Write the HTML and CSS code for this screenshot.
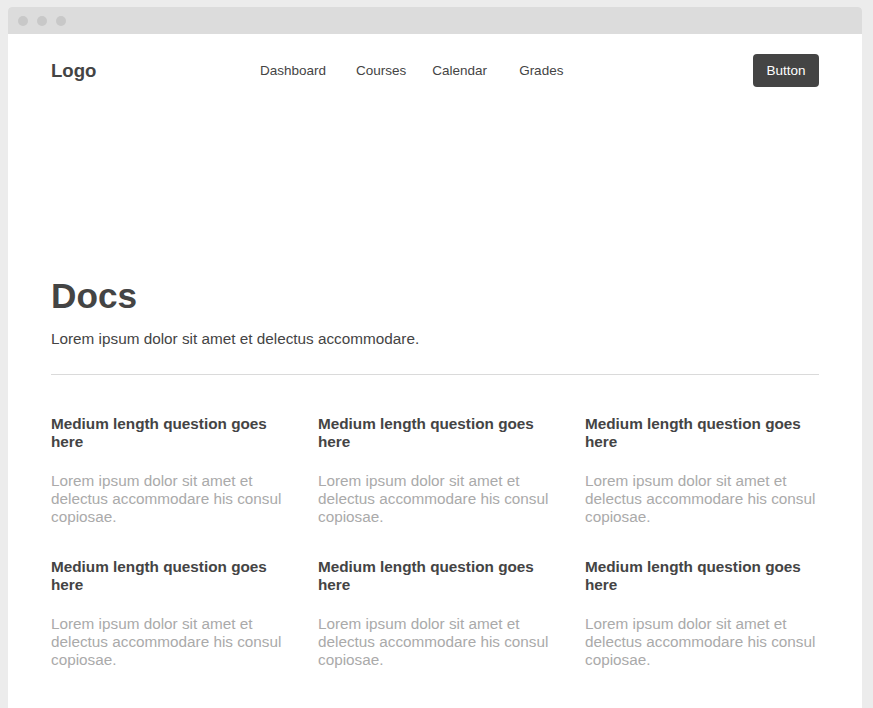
FILE: index.html
```html
<!DOCTYPE html>
<html lang="en">
<head>
<meta charset="utf-8">
<title>Docs</title>
<link rel="stylesheet" href="styles.css">
</head>
<body>
<div class="window">
  <div class="titlebar">
    <span class="dot"></span><span class="dot"></span><span class="dot"></span>
  </div>
  <div class="page">
    <header class="header">
      <div class="logo">Logo</div>
      <nav class="nav">
        <a class="nav-link nav-dash">Dashboard</a>
        <a class="nav-link nav-courses">Courses</a>
        <a class="nav-link nav-cal">Calendar</a>
        <a class="nav-link nav-grades">Grades</a>
      </nav>
      <button class="btn">Button</button>
    </header>
    <section class="hero">
      <h1 class="title">Docs</h1>
      <p class="subtitle">Lorem ipsum dolor sit amet et delectus accommodare.</p>
    </section>
    <hr class="divider">
    <section class="faq">
      <div class="item"><h3 class="q">Medium length question goes here</h3><p class="a">Lorem ipsum dolor sit amet et delectus accommodare his consul copiosae.</p></div>
      <div class="item"><h3 class="q">Medium length question goes here</h3><p class="a">Lorem ipsum dolor sit amet et delectus accommodare his consul copiosae.</p></div>
      <div class="item"><h3 class="q">Medium length question goes here</h3><p class="a">Lorem ipsum dolor sit amet et delectus accommodare his consul copiosae.</p></div>
      <div class="item"><h3 class="q">Medium length question goes here</h3><p class="a">Lorem ipsum dolor sit amet et delectus accommodare his consul copiosae.</p></div>
      <div class="item"><h3 class="q">Medium length question goes here</h3><p class="a">Lorem ipsum dolor sit amet et delectus accommodare his consul copiosae.</p></div>
      <div class="item"><h3 class="q">Medium length question goes here</h3><p class="a">Lorem ipsum dolor sit amet et delectus accommodare his consul copiosae.</p></div>
    </section>
  </div>
</div>
</body>
</html>
```

FILE: styles.css
```css
* { box-sizing: border-box; }
html, body { margin: 0; padding: 0; }
body {
  background: #ececec;
  font-family: "Liberation Sans", Arial, Helvetica, sans-serif;
  color: #444;
  height: 708px;
  overflow: hidden;
}
.window {
  margin: 7px 0 0 8px;
  width: 854px;
  height: 701px;
  background: #fff;
  border-radius: 4px 4px 0 0;
  overflow: hidden;
}
.titlebar {
  height: 27px;
  background: #dcdcdc;
  display: flex;
  align-items: center;
  gap: 9px;
  padding-left: 10px;
}
.dot {
  width: 10px;
  height: 10px;
  border-radius: 50%;
  background: #c8c8c8;
}
.page {
  padding: 0 43px;
}
.header {
  display: flex;
  align-items: center;
  padding-top: 20px;
  height: 53px;
}
.logo {
  flex: 0 0 209px;
  font-size: 18.6px;
  font-weight: 700;
  color: #444;
}
.nav {
  display: flex;
  align-items: center;
  font-size: 13.5px;
}
.nav-link { color: #444; text-decoration: none; }
.nav-courses { margin-left: 30px; }
.nav-cal { margin-left: 26px; }
.nav-grades { margin-left: 32px; }
.btn {
  margin-left: auto;
  width: 66px;
  height: 33px;
  border: 0;
  border-radius: 4px;
  background: #444;
  color: #fff;
  font-family: inherit;
  font-size: 13.5px;
  padding: 0;
}
.hero {
  margin-top: 186px;
}
.title {
  margin: 0;
  font-size: 35.2px;
  line-height: 45px;
  font-weight: 700;
  color: #444;
}
.subtitle {
  margin: 12px 0 0;
  font-size: 15.3px;
  line-height: 18px;
  color: #444;
}
.divider {
  margin: 26px 0 0;
  border: 0;
  border-top: 1px solid #dadada;
  height: 0;
}
.faq {
  margin-top: 40px;
  display: grid;
  grid-template-columns: repeat(3, 1fr);
  column-gap: 33px;
  row-gap: 32px;
}
.q {
  margin: 0;
  font-size: 15.3px;
  line-height: 18px;
  font-weight: 700;
  color: #444;
}
.a {
  margin: 21px 0 0;
  font-size: 15.3px;
  line-height: 18px;
  color: #aaa;
}
```
